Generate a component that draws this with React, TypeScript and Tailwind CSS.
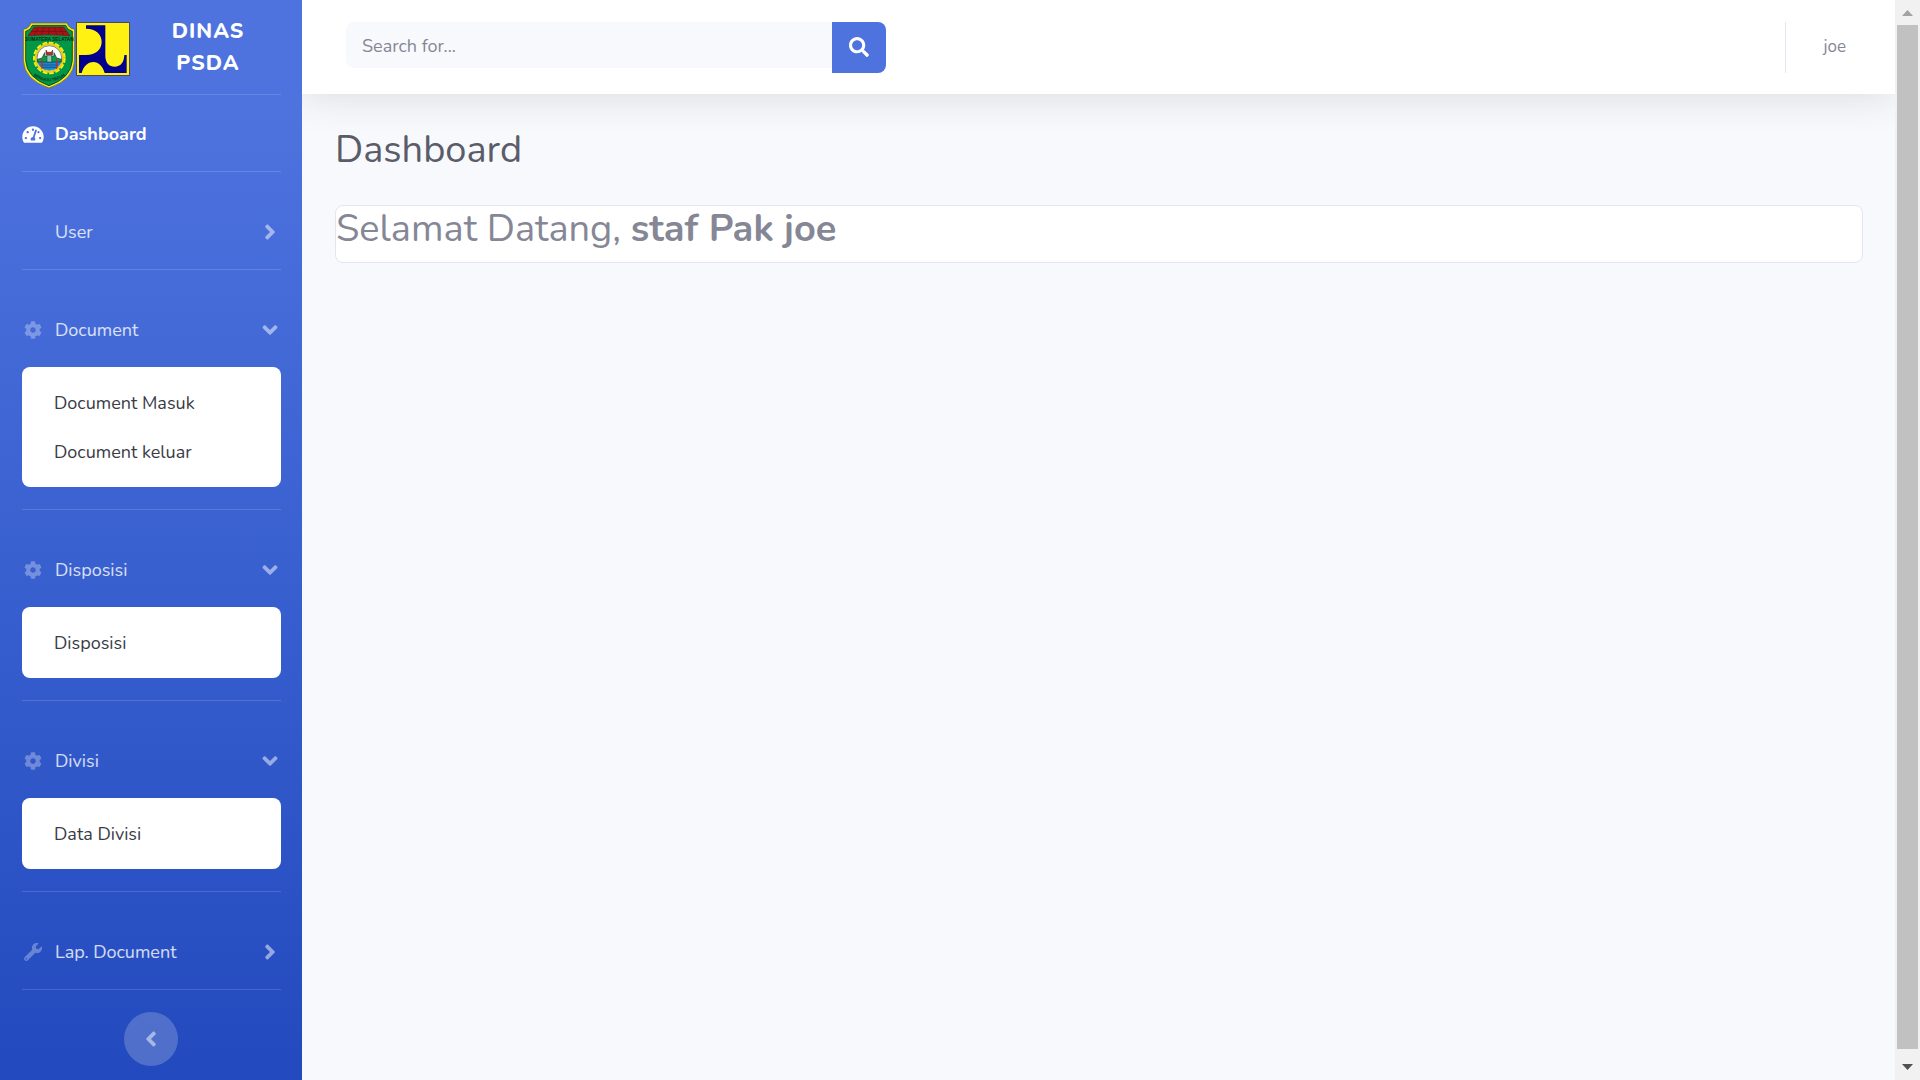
import { useState, type ReactNode } from "react";
import {
  FaAngleDown,
  FaAngleLeft,
  FaAngleRight,
  FaCog,
  FaSearch,
  FaTachometerAlt,
  FaWrench,
} from "react-icons/fa";

function ProvinceCrest() {
  return (
    <svg viewBox="66 66 162 201" className="h-[67px] w-[54px]" role="img" aria-label="Sumatera Selatan">
      <defs>
        <path id="crest-motto" d="M100 226 Q146 262 196 226" />
      </defs>
      <path
        d="M92 69H202Q204 84 224 88V182Q221 240 147 264Q73 240 70 182V88Q90 84 92 69Z"
        fill="#f7ec13"
        stroke="#4d5a3a"
        strokeWidth="2"
      />
      <path
        d="M97 76H197Q201 90 217 94V182Q213 234 147 257Q81 234 77 182V94Q93 90 97 76Z"
        fill="#009846"
        stroke="#17351f"
        strokeWidth="2.5"
      />
      <path d="M103 81H191L210 107Q147 102 84 107Z" fill="#b01116" stroke="#5d1512" strokeWidth="1.5" />
      <path
        d="M94 94H200M115 82L103 105M131 82L124 104M147 82V104M163 82L170 104M179 82L191 105"
        stroke="#5d1512"
        strokeWidth="2"
        fill="none"
      />
      <text
        x="148"
        y="124"
        textAnchor="middle"
        fontFamily="'Liberation Sans', sans-serif"
        fontSize="14"
        fontWeight="700"
        fill="#0b2413"
      >
        SUMATERA SELATAN
      </text>
      <circle cx="148" cy="174" r="45" fill="none" stroke="#f7ec13" strokeWidth="8" strokeDasharray="14 5" />
      <circle cx="148" cy="174" r="41" fill="#fff" stroke="#e8cf10" strokeWidth="6" />
      <circle cx="148" cy="174" r="37" fill="#fff" stroke="#3c4a24" strokeWidth="2" />
      <path d="M112 184H184Q176 210 148 210Q120 210 112 184Z" fill="#1c86c8" />
      <path d="M122 195H174M128 202H168" stroke="#0c4a80" strokeWidth="2" />
      <path d="M112 178L126 174L134 158V168H162V158L170 174L184 178V186H112Z" fill="#0b9a52" stroke="#103c22" strokeWidth="2" />
      <path d="M138 150L142 157H154L158 150V164H138Z" fill="#c2272d" stroke="#3b1512" strokeWidth="1.5" />
      <path d="M141 166H155V186H141Z" fill="#8fc9a8" stroke="#103c22" strokeWidth="1.5" />
      <path d="M126 178V206M170 178V206" stroke="#c2272d" strokeWidth="4" />
      <text fontFamily="'Liberation Sans', sans-serif" fontSize="12" fontWeight="700" fill="#0b2413">
        <textPath href="#crest-motto" startOffset="50%" textAnchor="middle">
          BERSATU TEGUH
        </textPath>
      </text>
    </svg>
  );
}

function PublicWorksLogo() {
  return (
    <svg viewBox="228 69 162 162" className="size-[54px]" role="img" aria-label="PU">
      <rect x="229.5" y="70.5" width="159" height="159" fill="#fff212" stroke="#4b4a5c" strokeWidth="3" />
      <path
        d="M258 79H316V170C316 192 328 203 344 203C362 203 372 190 373 168H380V222H314C308 201 296 189 280 189C263 189 251 201 245 222H237V168H258C288 168 305 150 305 128C305 106 288 89 258 89Z"
        fill="#00008c"
      />
    </svg>
  );
}

function Divider() {
  return <hr className="mr-[21px] ml-[22px] border-t border-white/15" />;
}

function MenuSection({
  id,
  icon,
  label,
  items = [],
}: {
  id: string;
  icon?: ReactNode;
  label: string;
  items?: string[];
}) {
  const [open, setOpen] = useState(items.length > 0);
  const expanded = open && items.length > 0;
  return (
    <>
      <section className="pt-[21px]">
        <button
          type="button"
          aria-expanded={expanded}
          aria-controls={id}
          onClick={() => setOpen(!open)}
          className="flex h-[76px] w-full items-center gap-[11px] pt-0.5 pr-5 pl-[22px] text-left text-white/80"
        >
          <span className="flex w-[22px] shrink-0 justify-center text-white/30">{icon}</span>
          <span className="flex-1">{label}</span>
          <span className="flex w-6 shrink-0 justify-center text-2xl text-white/50">
            {expanded ? <FaAngleDown /> : <FaAngleRight />}
          </span>
        </button>
        {expanded && (
          <ul id={id} className="mr-[21px] mb-[22px] ml-[22px] rounded-lg bg-white py-[11px]">
            {items.map((item) => (
              <li key={item}>
                <a href="#" className="mx-[11px] block px-[21px] pt-3 pb-2.5 leading-[27px] text-[#3a3b45]">
                  {item}
                </a>
              </li>
            ))}
          </ul>
        )}
      </section>
      <Divider />
    </>
  );
}

function Sidebar() {
  return (
    <nav className="w-[302px] shrink-0 bg-linear-to-b from-[#4e73df] from-10% to-[#224abe] text-lg">
      <a href="#" className="flex h-[94px] items-center pr-4 pl-[22px] text-white">
        <span className="flex shrink-0 items-start pt-4">
          <ProvinceCrest />
          <PublicWorksLogo />
        </span>
        <span className="mx-5 flex-1 text-center text-[21px] leading-8 font-extrabold tracking-wider">
          DINAS PSDA
        </span>
      </a>
      <Divider />
      <a href="#" className="flex h-[76px] items-center gap-[11px] px-[22px] pt-0.5 font-bold text-white">
        <FaTachometerAlt className="w-[22px] text-[19px]" />
        Dashboard
      </a>
      <Divider />
      <MenuSection id="menu-user" label="User" />
      <MenuSection
        id="menu-document"
        icon={<FaCog />}
        label="Document"
        items={["Document Masuk", "Document keluar"]}
      />
      <MenuSection id="menu-disposisi" icon={<FaCog />} label="Disposisi" items={["Disposisi"]} />
      <MenuSection id="menu-divisi" icon={<FaCog />} label="Divisi" items={["Data Divisi"]} />
      <MenuSection id="menu-laporan" icon={<FaWrench />} label="Lap. Document" />
      <div className="flex justify-center pt-[22px]">
        <button
          type="button"
          aria-label="Collapse sidebar"
          className="flex size-[54px] items-center justify-center rounded-full bg-white/20 text-2xl text-white/50"
        >
          <FaAngleLeft />
        </button>
      </div>
    </nav>
  );
}

function Topbar() {
  return (
    <header className="flex h-[94px] items-center justify-between bg-white pr-[49px] pl-11 text-lg text-[#858796] shadow-[0_3px_38px_rgba(58,59,69,0.15)]">
      <form className="flex w-full max-w-[540px] items-start" onSubmit={(e) => e.preventDefault()}>
        <input
          type="text"
          aria-label="Search"
          placeholder="Search for..."
          className="h-[46px] min-w-0 flex-1 rounded-l-lg bg-[#f8f9fc] px-4 pt-0.5 outline-none placeholder:text-[#858796]"
        />
        <button
          type="submit"
          aria-label="Submit search"
          className="flex h-[51px] w-[54px] items-center justify-center rounded-r-lg bg-[#4e73df] text-xl text-white"
        >
          <FaSearch />
        </button>
      </form>
      <div className="flex h-[51px] items-center border-l border-[#e3e6f0] pl-[37px]">
        <a href="#" className="text-[17px]">joe</a>
      </div>
    </header>
  );
}

function ScrollTrack() {
  return (
    <div aria-hidden="true" className="flex w-[25px] shrink-0 flex-col items-center bg-[#f1f1f1]">
      <svg viewBox="0 0 21 25" className="h-[25px] w-[21px]">
        <path d="M5 16H16L10.500 10Z" fill="#a3a3a3" />
      </svg>
      <div className="w-[21px] flex-1 bg-[#c1c1c1]" />
      <svg viewBox="0 0 21 31" className="h-[31px] w-[21px]">
        <path d="M5 15H16L10.500 21Z" fill="#505050" />
      </svg>
    </div>
  );
}

export default function App() {
  return (
    <div className="flex min-h-screen bg-[#f8f9fc] font-[Nunito,Lato,sans-serif]">
      <Sidebar />
      <div className="min-w-0 flex-1 overflow-x-hidden">
        <Topbar />
        <main className="pt-[33px] pr-8 pl-[33px] text-[38px] leading-[46px]">
          <h1 className="mb-8 text-[#5a5c69]">Dashboard</h1>
          <div className="rounded-lg border border-[#e3e6f0] bg-white pb-2.5 text-[#858796]">
            <p>
              Selamat Datang, <b>staf Pak joe</b>
            </p>
          </div>
        </main>
      </div>
      <ScrollTrack />
    </div>
  );
}
